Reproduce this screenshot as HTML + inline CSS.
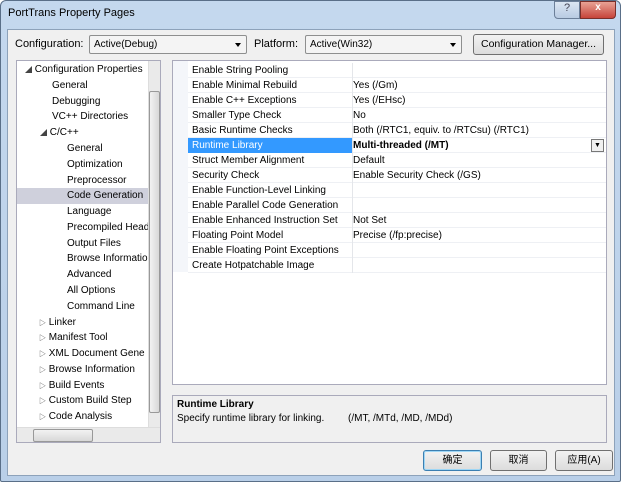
<!DOCTYPE html><html><head><meta charset="utf-8"><style>
*{margin:0;padding:0;box-sizing:border-box}
body{width:621px;height:484px;overflow:hidden;background:#fff;font-family:"Liberation Sans","Noto Sans CJK SC",sans-serif;font-size:10px;color:#000;position:relative}
.frame{position:absolute;left:0;top:0;width:621px;height:482px;background:linear-gradient(#c4d8ee,#b9cfe8);border:1px solid #5a6f88;border-radius:6px 6px 2px 2px}
.client{position:absolute;left:7px;top:29px;width:608px;height:447px;background:#f0f0f0;border:1px solid #8da2ba}
.a{position:absolute;white-space:nowrap}
.combo{position:absolute;height:19px;background:#f4f4f4;border:1px solid #8e8f8f;border-radius:2px;padding:3px 4px}
.combo:after{content:"";position:absolute;right:5px;top:7px;border:3px solid transparent;border-top:4px solid #000}
.btn{position:absolute;height:21px;border:1px solid #707070;border-radius:3px;background:linear-gradient(#f2f2f2,#dcdcdc);text-align:center;line-height:19px}
.tree{position:absolute;left:16px;top:60px;width:145px;height:383px;background:#fff;border:1px solid #aab;overflow:hidden}
.tree div{position:absolute;white-space:nowrap;height:16px;line-height:16px}
.grid{position:absolute;left:172px;top:60px;width:435px;height:325px;background:#fff;border:1px solid #aab}
.row{position:absolute;left:15px;width:418px;height:15px;line-height:15px;border-bottom:1px solid #eef0f4;padding-left:4px}
.row span{position:absolute;left:165px}
.tri{font-size:7px;color:#444}
</style></head><body>
<div class="frame"></div>
<div class="a" style="left:8px;top:7px;font-size:11px">PortTrans Property Pages</div>
<div class="a" style="left:554px;top:1px;width:26px;height:18px;border:1px solid #6c7f99;border-radius:0 0 0 4px;background:linear-gradient(#dbe6f3,#b9cbe2);text-align:center;color:#445;font-size:11px">?</div>
<div class="a" style="left:580px;top:1px;width:36px;height:18px;border:1px solid #7a2f2a;border-radius:0 0 4px 0;background:linear-gradient(#e8a295,#c7443a);text-align:center;color:#fff;font-weight:bold">x</div>
<div class="client"></div>
<div class="a" style="left:15px;top:38px;font-size:11px">Configuration:</div>
<div class="combo" style="left:89px;top:35px;width:158px">Active(Debug)</div>
<div class="a" style="left:254px;top:38px;font-size:11px">Platform:</div>
<div class="combo" style="left:305px;top:35px;width:157px">Active(Win32)</div>
<div class="btn" style="left:473px;top:34px;width:131px;font-size:10.5px">Configuration Manager...</div>

<div class="tree">
<div style="left:0;top:127px;width:132px;background:#cfd0dc"></div>
<div style="left:8px;top:1px"><span class="tri">◢</span> Configuration Properties</div>
<div style="left:35px;top:17px">General</div>
<div style="left:35px;top:33px">Debugging</div>
<div style="left:35px;top:48px">VC++ Directories</div>
<div style="left:23px;top:64px"><span class="tri">◢</span> C/C++</div>
<div style="left:50px;top:80px">General</div>
<div style="left:50px;top:96px">Optimization</div>
<div style="left:50px;top:112px">Preprocessor</div>
<div style="left:50px;top:127px">Code Generation</div>
<div style="left:50px;top:143px">Language</div>
<div style="left:50px;top:159px">Precompiled Head</div>
<div style="left:50px;top:175px">Output Files</div>
<div style="left:50px;top:190px">Browse Informatio</div>
<div style="left:50px;top:206px">Advanced</div>
<div style="left:50px;top:222px">All Options</div>
<div style="left:50px;top:238px">Command Line</div>
<div style="left:22px;top:254px"><span class="tri">▷</span> Linker</div>
<div style="left:22px;top:269px"><span class="tri">▷</span> Manifest Tool</div>
<div style="left:22px;top:285px"><span class="tri">▷</span> XML Document Gene</div>
<div style="left:22px;top:301px"><span class="tri">▷</span> Browse Information</div>
<div style="left:22px;top:317px"><span class="tri">▷</span> Build Events</div>
<div style="left:22px;top:332px"><span class="tri">▷</span> Custom Build Step</div>
<div style="left:22px;top:348px"><span class="tri">▷</span> Code Analysis</div>
<div style="left:131px;top:0;width:13px;height:366px;background:#eaeaea;border-left:1px solid #ddd"></div>
<div style="left:132px;top:30px;width:11px;height:322px;background:linear-gradient(90deg,#f2f2f2,#d8d8d8);border:1px solid #999;border-radius:2px"></div>
<div style="left:0;top:366px;width:144px;height:16px;background:#eaeaea;border-top:1px solid #ddd"></div>
<div style="left:16px;top:368px;width:60px;height:13px;background:linear-gradient(#f2f2f2,#d8d8d8);border:1px solid #999;border-radius:2px"></div>
</div>

<div class="grid">
<div class="a" style="left:0;top:0;width:15px;height:211px;background:#f4f6fa"></div>
<div class="row" style="top:2px">Enable String Pooling</div>
<div class="row" style="top:17px">Enable Minimal Rebuild<span>Yes (/Gm)</span></div>
<div class="row" style="top:32px">Enable C++ Exceptions<span>Yes (/EHsc)</span></div>
<div class="row" style="top:47px">Smaller Type Check<span>No</span></div>
<div class="row" style="top:62px">Basic Runtime Checks<span>Both (/RTC1, equiv. to /RTCsu) (/RTC1)</span></div>
<div class="row" style="top:77px"><div class="a" style="left:0;top:0;width:164px;height:15px;background:#3399ff;color:#fff;padding-left:4px">Runtime Library</div><span style="font-weight:bold">Multi-threaded (/MT)</span><div class="a" style="left:403px;top:1px;width:13px;height:13px;border:1px solid #777;background:#f0f0f0;font-size:7px;text-align:center;line-height:11px">▼</div></div>
<div class="row" style="top:92px">Struct Member Alignment<span>Default</span></div>
<div class="row" style="top:107px">Security Check<span>Enable Security Check (/GS)</span></div>
<div class="row" style="top:122px">Enable Function-Level Linking</div>
<div class="row" style="top:137px">Enable Parallel Code Generation</div>
<div class="row" style="top:152px">Enable Enhanced Instruction Set<span>Not Set</span></div>
<div class="row" style="top:167px">Floating Point Model<span>Precise (/fp:precise)</span></div>
<div class="row" style="top:182px">Enable Floating Point Exceptions</div>
<div class="row" style="top:197px">Create Hotpatchable Image</div>
<div class="a" style="left:179px;top:2px;width:1px;height:210px;background:#e4e6ea"></div>
</div>

<div class="a" style="left:172px;top:395px;width:435px;height:48px;border:1px solid #aab;background:#f0f0f0"></div>
<div class="a" style="left:177px;top:399px;font-weight:bold">Runtime Library</div>
<div class="a" style="left:177px;top:413px">Specify runtime library for linking.</div>
<div class="a" style="left:348px;top:413px">(/MT, /MTd, /MD, /MDd)</div>

<div class="btn" style="left:423px;top:450px;width:59px;border-color:#3c7fb1;box-shadow:inset 0 0 0 1px #9ed6f5">确定</div>
<div class="btn" style="left:490px;top:450px;width:57px">取消</div>
<div class="btn" style="left:555px;top:450px;width:58px">应用(A)</div>
</body></html>
